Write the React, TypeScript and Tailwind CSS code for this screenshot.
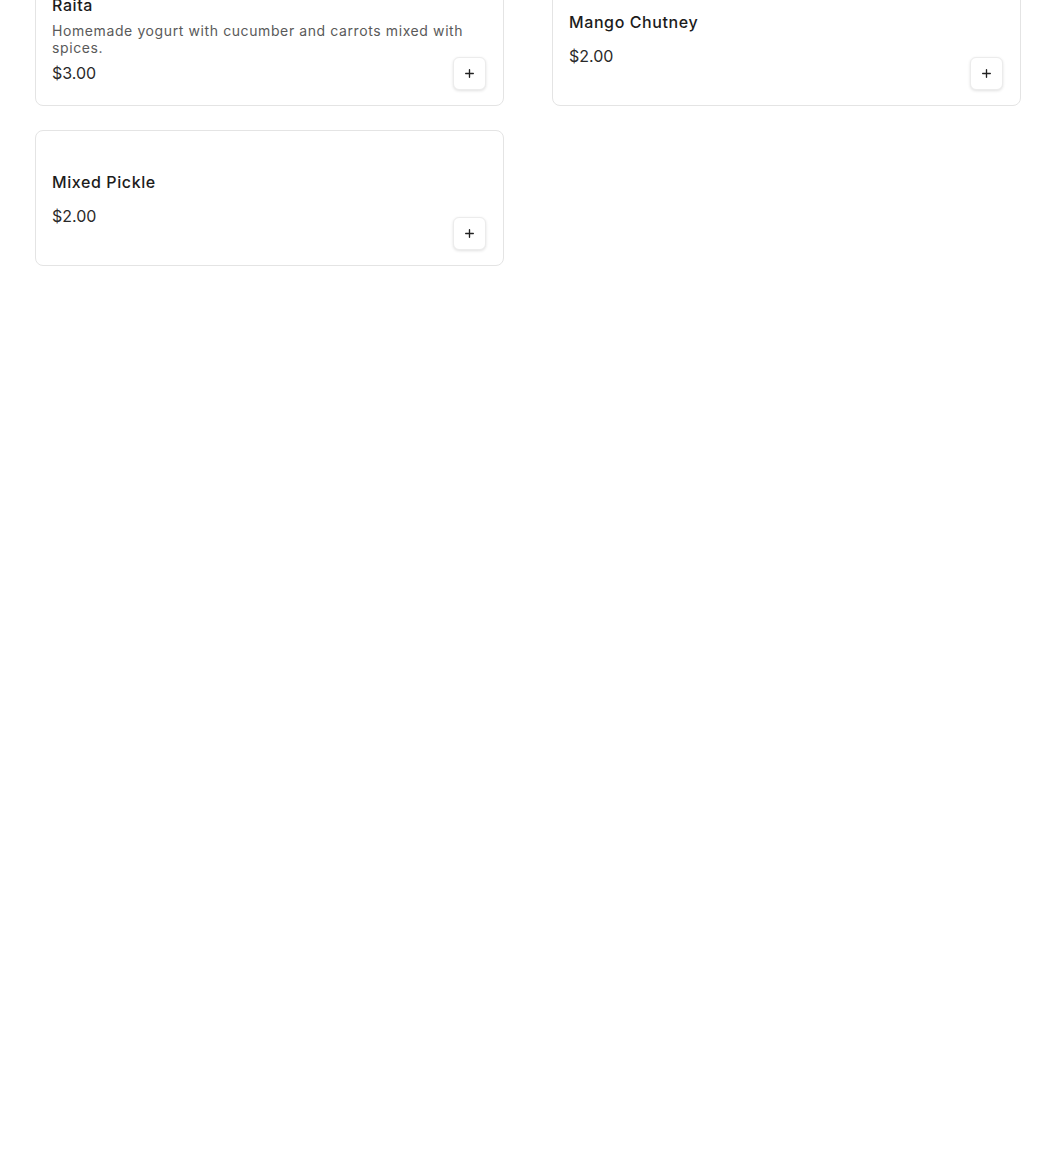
import { Plus } from 'lucide-react';

type Item = {
  name: string;
  description?: string;
  price: string;
};

const items: Item[] = [
  {
    name: 'Raita',
    description: 'Homemade yogurt with cucumber and carrots mixed with spices.',
    price: '$3.00',
  },
  { name: 'Mango Chutney', price: '$2.00' },
  { name: 'Mixed Pickle', price: '$2.00' },
];

function MenuCard({ item }: { item: Item }) {
  return (
    <div className="relative flex min-h-[136px] items-center rounded-lg border border-[#e4e4e4] bg-white px-4 pt-4 pb-[15px]">
      {/* Text block is centered in the card */}
      <div className="flex min-w-0 flex-1 flex-col justify-center">
        <h3 className="text-[16px] leading-6 font-medium tracking-[0.6px] text-[#1c1c1c]">{item.name}</h3>
        {item.description && (
          <p className="mt-[5px] text-[14px] leading-[17px] tracking-[0.6px] text-[#5a5a5a]">{item.description}</p>
        )}
        <div className={item.description ? 'mt-[5px] text-[16px] leading-6 text-[#2a2a2a]' : 'mt-[10px] text-[16px] leading-6 text-[#2a2a2a]'}>
          {item.price}
        </div>
      </div>
      {/* add button sits in the bottom-right corner */}
      <button className="absolute right-[17px] bottom-[15px] flex h-[33px] w-[33px] items-center justify-center rounded-md border border-[#ececec] bg-white shadow-[0_1px_3px_rgba(0,0,0,0.12)]">
        <Plus size={13} strokeWidth={2.5} className="text-[#222]" />
      </button>
    </div>
  );
}

export default function App() {
  return (
    <div className="min-h-screen bg-white font-['Inter','Open_Sans',sans-serif]">
      <main className="-mt-[30px] pl-[35px]">
        <div className="grid grid-cols-[469px_469px] gap-x-[48px] gap-y-[24px]">
          {items.map((item) => (
            <MenuCard key={item.name} item={item} />
          ))}
        </div>
      </main>
    </div>
  );
}
